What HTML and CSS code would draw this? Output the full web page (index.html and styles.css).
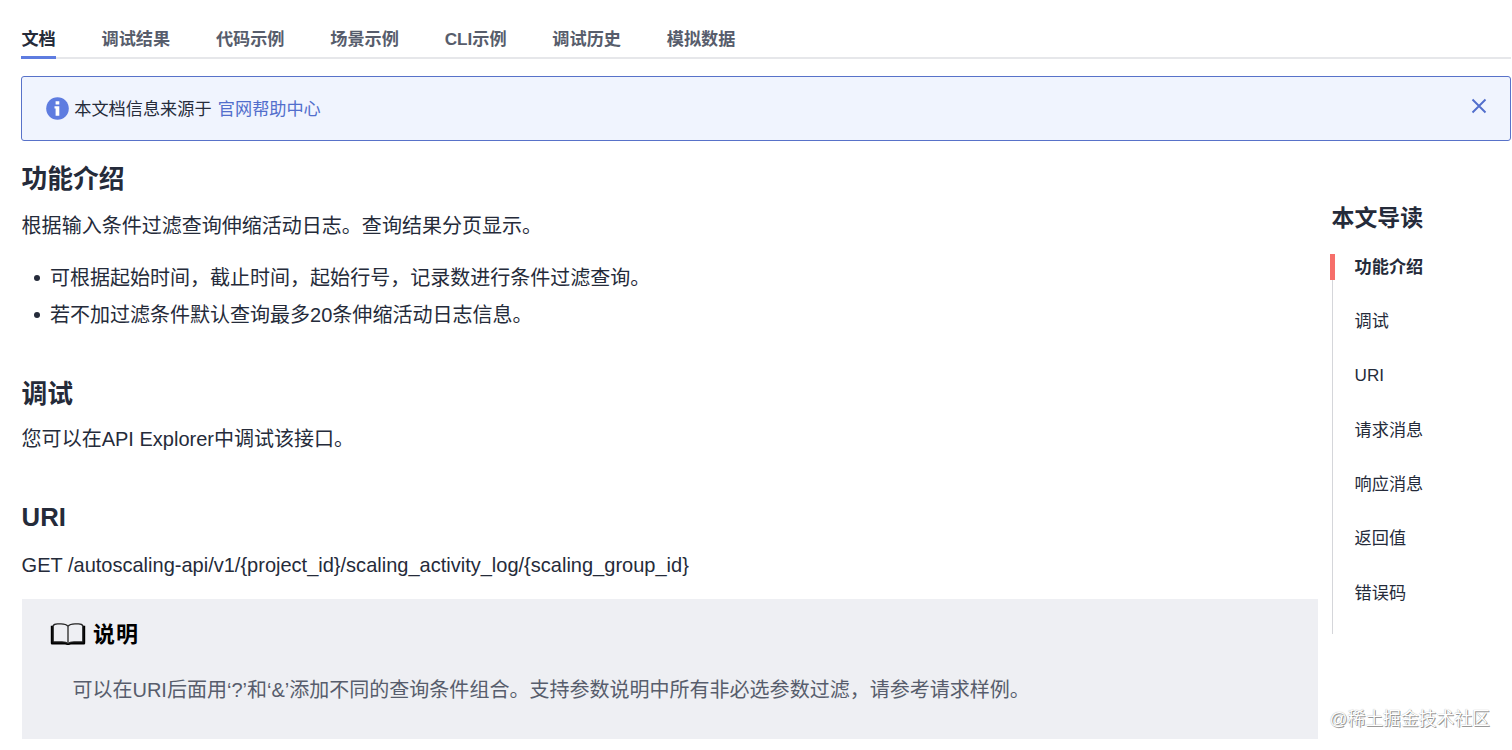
FILE: index.html
```html
<!DOCTYPE html>
<html lang="zh-CN">
<head>
<meta charset="utf-8">
<title>文档</title>
<link rel="stylesheet" href="styles.css">
</head>
<body>
<nav class="tabs">
  <a class="tab active">文档</a>
  <a class="tab">调试结果</a>
  <a class="tab">代码示例</a>
  <a class="tab">场景示例</a>
  <a class="tab">CLI示例</a>
  <a class="tab">调试历史</a>
  <a class="tab">模拟数据</a>
</nav>
<div class="alert">
  <svg class="info" viewBox="0 0 23 23"><circle cx="11.5" cy="11.5" r="11.3" fill="#5e7ce0"/><path d="M9.600 4.300h3.700v3.200h-3.700zM8.500 9.300h4.800v9.500h-3.700v-7.300H8.500z" fill="#fff"/></svg>
  <span class="alert-text">本文档信息来源于 <a class="link">官网帮助中心</a></span>
  <svg class="close" viewBox="0 0 16 16"><path d="M1.500 1.500l13 13M14.500 1.500l-13 13" stroke="#526ecc" stroke-width="1.900" fill="none"/></svg>
</div>
<div class="layout">
  <main class="content">
    <section class="intro">
      <h2>功能介绍</h2>
      <p>根据输入条件过滤查询伸缩活动日志。查询结果分页显示。</p>
      <ul>
        <li>可根据起始时间，截止时间，起始行号，记录数进行条件过滤查询。</li>
        <li>若不加过滤条件默认查询最多20条伸缩活动日志信息。</li>
      </ul>
    </section>
    <section class="debug">
      <h2>调试</h2>
      <p>您可以在API Explorer中调试该接口。</p>
    </section>
    <section class="uri">
      <h2>URI</h2>
      <p>GET /autoscaling-api/v1/{project_id}/scaling_activity_log/{scaling_group_id}</p>
      <div class="note">
        <div class="note-head">
          <svg class="book" viewBox="0 0 36 22"><path d="M2 2.800V20.300H15.500L18 21L20.500 20.300H34V2.800" fill="none" stroke="#000" stroke-width="2.400" stroke-linejoin="round"/><path d="M3.200 18.800V2.800Q4 .8 7.500 .8H11C14 .8 17 2 18 3.400C19 2 22 .8 25 .8H28.500Q32 .8 32.800 2.800V18.800H24C21 18.800 19 19.500 18 20.400C17 19.500 15 18.800 12 18.800Z" fill="#eeeff3" stroke="#222" stroke-width="1.300"/><path d="M18 3v17" stroke="#555" stroke-width="1.700"/></svg>
          <span>说明</span>
        </div>
        <p>可以在URI后面用‘?’和‘&amp;’添加不同的查询条件组合。支持参数说明中所有非必选参数过滤，请参考请求样例。</p>
      </div>
    </section>
  </main>
  <aside class="guide">
    <h3>本文导读</h3>
    <ul class="toc">
      <li class="current">功能介绍</li>
      <li>调试</li>
      <li>URI</li>
      <li>请求消息</li>
      <li>响应消息</li>
      <li>返回值</li>
      <li>错误码</li>
    </ul>
  </aside>
</div>
<div class="watermark">@稀土掘金技术社区</div>
</body>
</html>
```
FILE: styles.css
```css
* { box-sizing: border-box; margin: 0; padding: 0; }
body {
  width: 1512px;
  height: 750px;
  padding: 18px 1px 0 21.6px;
  overflow: hidden;
  background: #fff;
  color: #252b3a;
  font-family: "Liberation Sans", "Noto Sans CJK SC", sans-serif;
  font-size: 20.03px;
}
.tabs {
  display: flex;
  gap: 45.75px;
  height: 41px;
  margin-left: -.2px;
  border-bottom: 2px solid #e6e7ea;
  font-size: 17.16px;
  font-weight: 700;
}
.tab { height: 41px; line-height: 42px; color: #575d6c; }
.tab.active { color: #252b3a; border-bottom: 3px solid #5e7ce0; }
.alert {
  display: flex;
  align-items: center;
  height: 65.400px;
  margin: 17px 0 0 -.3px;
  padding: 0 23px 0 24px;
  border: 1.4px solid #5872c9;
  border-radius: 3px;
  background: #f0f4fe;
  font-size: 17.16px;
}
.info { width: 23px; height: 23px; margin: 0 5px 0 0; }
.alert-text { flex: 1; white-space: pre; line-height: 26px; }
.link { color: #526ecc; margin-left: 1.500px; }
.close { width: 16px; height: 16px; margin-bottom: 6px; }
.layout { display: flex; gap: 14px; }
.content { width: 1296px; }
h2 { font-size: 25.74px; line-height: 36px; font-weight: 700; }
p { line-height: 30px; }
.intro { padding-top: 19.600px; }
.intro p { margin-top: 14px; }
.intro ul { list-style: none; margin-top: 17px; }
.intro li { display: flex; align-items: center; height: 37.300px; padding-left: 12px; }
.intro li::before { content: ""; width: 6px; height: 6px; margin: 2px 10.300px 0 0; border-radius: 50%; background: #252b3a; }
.debug { margin-top: 43.400px; }
.debug p { margin-top: 12.500px; }
.uri { margin-top: 45px; }
.uri > p { margin-top: 14.500px; }
.note { height: 140px; margin-top: 19px; padding: 18px 28.800px; background: #eeeff3; color: #575d6c; }
.note-head { display: flex; align-items: center; gap: 6.500px; height: 30px; color: #000; font-size: 22px; font-weight: 700; letter-spacing: 1px; }
.book { width: 36px; height: 22px; margin-top: 4px; }
.note p { margin: 28px 0 0 22px; }
.guide { width: 179px; padding-top: 60.600px; }
.guide h3 { font-size: 22.88px; line-height: 32px; }
.toc {
  position: relative;
  height: 380px;
  margin-top: 20px;
  padding-left: 23px;
  list-style: none;
  font-size: 17.16px;
  background: linear-gradient(#d5d6da, #d5d6da) 0 0 / 1px 100% no-repeat;
}
.toc li { height: 54.300px; line-height: 26px; }
.toc li:nth-child(3) { line-height: 24px; }
.toc .current { font-weight: 700; }
.toc .current::before { content: ""; position: absolute; left: -2px; top: 0; width: 5px; height: 26px; background: #f66f6a; }
.watermark {
  position: absolute;
  left: 1329.500px;
  top: 706px;
  line-height: 26px;
  font-size: 17.8px;
  color: #fff;
  text-shadow: 1px 1px 0 rgba(0, 0, 0, .4), 0 0 1px rgba(0, 0, 0, .4);
}
```
